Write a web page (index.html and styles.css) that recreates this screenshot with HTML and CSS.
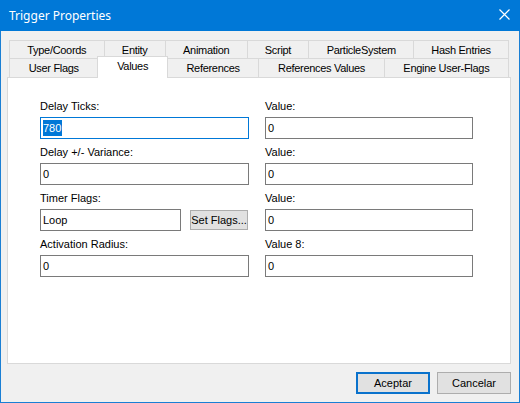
FILE: index.html
```html
<!DOCTYPE html>
<html lang="es">
<head>
    <meta charset="UTF-8">
    <title>Trigger Properties</title>
    <link rel="stylesheet" href="styles.css">
</head>
<body>
    <div class="window">
        <div class="titlebar">
            <span class="title">Trigger Properties</span>
            <svg class="close" width="11" height="11" viewBox="0 0 11 11">
                <path d="M0.5 0.5 L10.5 10.5 M10.5 0.5 L0.5 10.5" stroke="#fff" stroke-width="1.2" fill="none"/>
            </svg>
        </div>
        <div class="content">
            <div class="tabs">
                <div class="tab-row">
                    <div class="tab">Type/Coords</div>
                    <div class="tab">Entity</div>
                    <div class="tab">Animation</div>
                    <div class="tab">Script</div>
                    <div class="tab">ParticleSystem</div>
                    <div class="tab">Hash Entries</div>
                </div>
                <div class="tab-row tab-row-front">
                    <div class="tab">User Flags</div>
                    <div class="tab tab-active">Values</div>
                    <div class="tab">References</div>
                    <div class="tab">References Values</div>
                    <div class="tab">Engine User-Flags</div>
                </div>
            </div>
            <div class="panel">
                <div class="fields">
                    <div class="field">
                        <label>Delay Ticks:</label>
                        <div class="textbox textbox-focus"><span class="selection">780</span></div>
                    </div>
                    <div class="field">
                        <label>Value:</label>
                        <div class="textbox">0</div>
                    </div>
                    <div class="field">
                        <label>Delay +/- Variance:</label>
                        <div class="textbox">0</div>
                    </div>
                    <div class="field">
                        <label>Value:</label>
                        <div class="textbox">0</div>
                    </div>
                    <div class="field">
                        <label>Timer Flags:</label>
                        <div class="inline">
                            <div class="textbox textbox-short">Loop</div>
                            <div class="button button-small">Set Flags...</div>
                        </div>
                    </div>
                    <div class="field">
                        <label>Value:</label>
                        <div class="textbox">0</div>
                    </div>
                    <div class="field">
                        <label>Activation Radius:</label>
                        <div class="textbox">0</div>
                    </div>
                    <div class="field">
                        <label>Value 8:</label>
                        <div class="textbox">0</div>
                    </div>
                </div>
            </div>
            <div class="footer">
                <div class="button button-default">Aceptar</div>
                <div class="button">Cancelar</div>
            </div>
        </div>
    </div>
</body>
</html>
```

FILE: styles.css
```css
body {
    margin: 0;
    background: #fff;
}
.window {
    box-sizing: border-box;
    width: 520px;
    height: 403px;
    background-color: #f0f0f0;
    border: 1px solid #1a7fd4;
    border-top: none;
    font-family: "Liberation Sans", Arial, sans-serif;
    font-size: 11px;
    color: #000;
    display: flex;
    flex-direction: column;
}
.titlebar {
    height: 31px;
    flex: none;
    background-color: #0078d7;
    color: #fff;
    display: flex;
    align-items: center;
    justify-content: space-between;
    padding: 0 10px 0 9px;
    margin: 0 -1px;
}
.title {
    font-family: "Noto Sans", "Open Sans", sans-serif;
    font-size: 12px;
}
.close {
    margin-top: -2px;
}
.content {
    padding: 9px 8px 0 6px;
}
.tabs {
    padding: 0 2px;
}
.tab-row {
    display: flex;
    height: 18px;
}
.tab-row-front {
    height: 19px;
}
.tab {
    flex: 1 1 auto;
    box-sizing: border-box;
    border: 1px solid #d9d9d9;
    border-bottom: none;
    margin-left: -1px;
    padding-top: 1px;
    background-color: #f0f0f0;
    text-align: center;
    line-height: 17px;
    letter-spacing: -0.3px;
    white-space: nowrap;
}
.tab:first-child {
    margin-left: 0;
}
.tab-row-front .tab {
    padding-top: 0;
    line-height: 18px;
}
.tab-row-front .tab.tab-active {
    position: relative;
    z-index: 1;
    background-color: #fff;
    margin-top: -2px;
    height: 22px;
    line-height: 18px;
}
.panel {
    box-sizing: border-box;
    height: 287px;
    background-color: #fff;
    border: 1px solid #d9d9d9;
    padding: 21px 0 0 32px;
}
.fields {
    display: grid;
    grid-template-columns: 209px 208px;
    column-gap: 16px;
    row-gap: 6px;
}
.field {
    display: flex;
    flex-direction: column;
}
.field label {
    line-height: 14px;
    margin-bottom: 4px;
}
.textbox {
    box-sizing: border-box;
    height: 22px;
    border: 1px solid #7a7a7a;
    background: #fff;
    padding: 0 2px;
    line-height: 20px;
}
.textbox-focus {
    border-color: #0078d7;
}
.textbox-short {
    width: 141px;
}
.selection {
    background-color: #0078d7;
    color: #fff;
    display: inline-block;
    line-height: 16px;
    padding-right: 1px;
}
.inline {
    display: flex;
    align-items: center;
}
.button {
    box-sizing: border-box;
    width: 74px;
    height: 22px;
    background-color: #e1e1e1;
    border: 1px solid #adadad;
    display: flex;
    align-items: center;
    justify-content: center;
}
.button-small {
    width: 58px;
    height: 20px;
    margin-left: 9px;
}
.button-default {
    border: 2px solid #0a72cc;
}
.footer {
    display: flex;
    justify-content: flex-end;
    gap: 7px;
    margin-top: 8px;
}
```
